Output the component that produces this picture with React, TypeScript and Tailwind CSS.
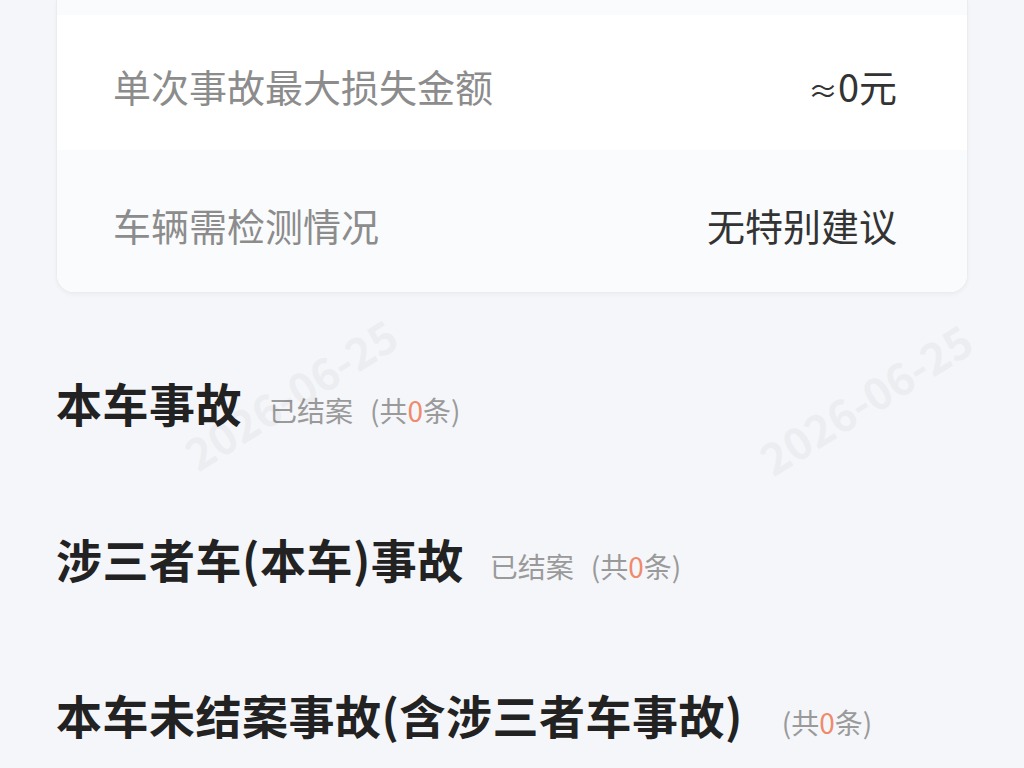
import React from 'react';

const font = { fontFamily: '"Noto Sans CJK SC", "Noto Sans", sans-serif' };

type Row = { label: string; value: React.ReactNode; shade?: boolean; height: string };

const rows: Row[] = [
  {
    label: '单次事故最大损失金额',
    value: (
      <>
        <span className="text-[30px]">≈</span>0元
      </>
    ),
    height: 'h-[135px]',
  },
  { label: '车辆需检测情况', value: '无特别建议', shade: true, height: 'h-[142px]' },
];

const Count: React.FC<{ n: number }> = ({ n }) => (
  <span>
    (共<span className="text-[#f08a6c]">{n}</span>条)
  </span>
);

const Section: React.FC<{ title: string; closed?: boolean; gap: string; n: number }> = ({ title, closed, gap, n }) => (
  <div className="flex items-baseline">
    <h2 className="text-[46px] tracking-[0.5px] font-bold text-[#222] leading-none">{title}</h2>
    <div className={`flex items-baseline gap-[17px] text-[28px] text-[#9a9a9a] leading-none ${gap}`}>
      {closed && <span>已结案</span>}
      <Count n={n} />
    </div>
  </div>
);

export default function App() {
  return (
    <div className="relative w-[1024px] h-[768px] overflow-hidden bg-[#f5f6f9]" style={font}>
      {/* date watermarks */}
      <div className="pointer-events-none absolute left-[170px] top-[360px] -rotate-[32deg] text-[44px] font-bold text-[#000] opacity-[0.03]">
        2026-06-25
      </div>
      <div className="pointer-events-none absolute left-[745px] top-[365px] -rotate-[32deg] text-[44px] font-bold text-[#000] opacity-[0.03]">
        2026-06-25
      </div>

      <div className="mx-[56px] bg-white rounded-b-[18px] border-x border-b border-[#ebecef] shadow-[0_2px_4px_rgba(0,0,0,0.04)] overflow-hidden">
        <div className="h-[15px] bg-[#fafbfc]" />
        {rows.map((r) => (
          <div
            key={r.label}
            className={`flex items-center justify-between pt-[6px] pl-[56px] pr-[70px] ${r.height} ${r.shade ? 'bg-[#fafbfc]' : 'bg-white'}`}
          >
            <span className="text-[38px] text-[#8c8c8c]">{r.label}</span>
            <span className="text-[38px] text-[#333]">{r.value}</span>
          </div>
        ))}
      </div>

      <div className="flex flex-col gap-[110px] pl-[56px] pt-[86px]">
        <Section title="本车事故" closed gap="ml-[27px]" n={0} />
        <Section title="涉三者车(本车)事故" closed gap="ml-[26px]" n={0} />
        <Section title="本车未结案事故(含涉三者车事故)" gap="ml-[39px]" n={0} />
      </div>
    </div>
  );
}
